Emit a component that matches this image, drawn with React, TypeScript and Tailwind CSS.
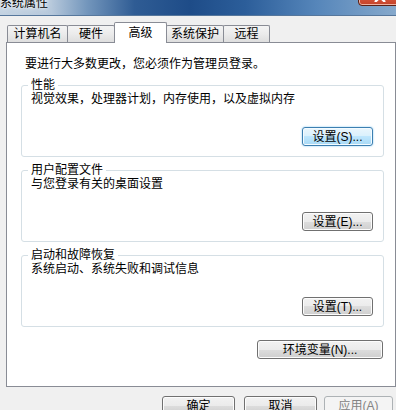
import type { ReactNode } from "react";

const btnBase =
  "flex items-center justify-center rounded-[3px] border text-[12px] leading-[14px] h-[19px]";
const btnNormal =
  "border-[#707070] bg-[linear-gradient(to_bottom,#f2f2f2_0%,#ebebeb_50%,#dddddd_50%,#cfcfcf_100%)] shadow-[inset_0_0_0_1px_#fcfcfc] text-black";
const btnFocus =
  "border-[#3c7fb1] bg-[linear-gradient(to_bottom,#eaf6fd_0%,#d9f0fc_50%,#bee6fd_50%,#a7d9f5_100%)] shadow-[inset_0_0_0_1px_#f4fbff,0_0_2px_#7ec4f0] text-black";
const btnDisabled = "border-[#adb2b5] bg-[#f4f4f4] text-[#838383]";

function Button({
  children,
  className = "",
  kind = "normal",
}: {
  children: ReactNode;
  className?: string;
  kind?: "normal" | "focus" | "disabled";
}) {
  const look = kind === "focus" ? btnFocus : kind === "disabled" ? btnDisabled : btnNormal;
  return <div className={`${btnBase} ${look} ${className}`}>{children}</div>;
}

function GroupBox({
  title,
  desc,
  button,
  focus,
  className = "",
}: {
  title: string;
  desc: string;
  button: string;
  focus?: boolean;
  className?: string;
}) {
  return (
    <fieldset
      className={`rounded-[3px] border border-[#d5dfe5] px-[6px] pb-[10px] ${className}`}
    >
      <legend className="px-[3px] text-[12px] leading-[14px]">{title}</legend>
      <p className="pl-[3px] text-[12px] leading-[14px]">{desc}</p>
      <div className="mt-[21px] flex justify-end pr-[4px]">
        <Button kind={focus ? "focus" : "normal"} className="w-[71px]">
          {button}
        </Button>
      </div>
    </fieldset>
  );
}

const tabs = [
  { label: "计算机名", w: "w-[61px]" },
  { label: "硬件", w: "w-[48px]" },
  { label: "高级", w: "w-[53px]", active: true },
  { label: "系统保护", w: "w-[58px]" },
  { label: "远程", w: "w-[47px]" },
];

export default function App() {
  return (
    <div className="h-[410px] w-[396px] overflow-hidden bg-[#f0f0f0] font-['Liberation_Sans','Noto_Sans_CJK_SC',sans-serif] text-black">
      {/* title bar, cut off at the top */}
      <div className="relative flow-root h-[16px] border-b border-[#56779c] bg-[linear-gradient(to_right,#c4d3e2_0%,#b6c8db_13%,#7396bc_22%,#2f5c94_34%,#1e4c88_48%,#2c5e9a_62%,#5686ba_80%,#86a9cc_100%)]">
        <div className="-mt-[4px] text-[12px] leading-[14px] [text-shadow:0_0_6px_#fff,0_0_3px_#fff]">
          系统属性
        </div>
        <div className="absolute -top-[14px] left-[358px] flex h-[20px] w-[44px] items-end justify-center rounded-[4px] border border-[#5c2116] bg-[linear-gradient(to_bottom,#e9a898_0%,#d6553c_55%,#c4432a_100%)] shadow-[inset_0_0_0_1px_#eeb0a0]">
          <svg width="12" height="10" viewBox="0 0 12 10" className="mb-[3px]">
            <path d="M1 0 L11 10 M11 0 L1 10" stroke="#fff" strokeWidth="2.4" />
          </svg>
        </div>
      </div>

      {/* tab strip */}
      <div className="mt-[6px] flex h-[20px] items-end pl-[7px]">
        {tabs.map((t, i) =>
          t.active ? (
            <div
              key={t.label}
              className={`relative z-10 -mb-[1px] -ml-[1px] flex h-[21px] items-center justify-center rounded-t-[2px] border border-b-0 border-[#898c95] bg-white pb-[1px] text-[12px] leading-[14px] ${t.w}`}
            >
              {t.label}
            </div>
          ) : (
            <div
              key={t.label}
              className={`flex h-[17px] items-center justify-center rounded-t-[2px] border border-b-0 border-[#898c95] bg-[linear-gradient(to_bottom,#f4f4f4_0%,#ebebeb_50%,#dedede_100%)] text-[12px] leading-[14px] ${i > 0 ? "-ml-[1px]" : ""} ${t.w}`}
            >
              {t.label}
            </div>
          ),
        )}
      </div>

      {/* tab page */}
      <div className="ml-[6px] w-[390px] border border-[#898c95] bg-white pb-[27px] pl-[14px] pr-[11px] pt-[14px]">
        <p className="ml-[4px] text-[12px] leading-[14px]">
          要进行大多数更改，您必须作为管理员登录。
        </p>
        <GroupBox
          className="mt-[7px]"
          title="性能"
          desc="视觉效果，处理器计划，内存使用，以及虚拟内存"
          button="设置(S)..."
          focus
        />
        <GroupBox
          className="mt-[6px]"
          title="用户配置文件"
          desc="与您登录有关的桌面设置"
          button="设置(E)..."
        />
        <GroupBox
          className="mt-[6px]"
          title="启动和故障恢复"
          desc="系统启动、系统失败和调试信息"
          button="设置(T)..."
        />
        <div className="mt-[13px] flex justify-end pr-[1px]">
          <Button className="w-[126px]">环境变量(N)...</Button>
        </div>
      </div>

      {/* dialog buttons */}
      <div className="mt-[9px] flex justify-end pr-[3px]">
        <Button className="w-[73px]">确定</Button>
        <Button className="ml-[9px] w-[73px]">取消</Button>
        <Button kind="disabled" className="ml-[7px] w-[69px]">
          应用(A)
        </Button>
      </div>
    </div>
  );
}
